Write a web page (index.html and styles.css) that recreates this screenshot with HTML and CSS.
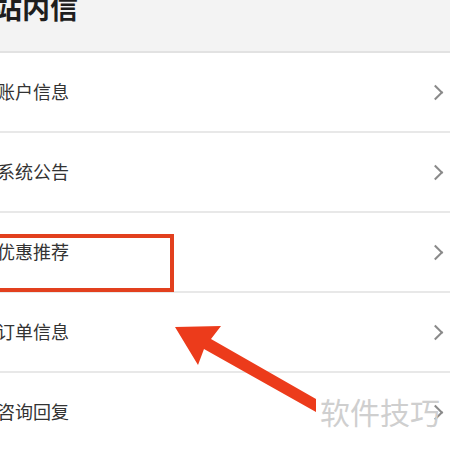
FILE: index.html
```html
<!DOCTYPE html>
<html lang="zh-CN">
<head>
  <meta charset="UTF-8" />
  <meta name="viewport" content="width=device-width, initial-scale=1.0" />
  <title>站内信</title>
  <link rel="stylesheet" href="styles.css">
</head>
<body>
  <div class="page">
    <header class="topbar">
      <h1>站内信</h1>
    </header>

    <!-- message categories -->
    <ul class="menu">
      <li class="menu-item"><span>账户信息</span><i class="chev"></i></li>
      <li class="menu-item"><span>系统公告</span><i class="chev"></i></li>
      <li class="menu-item"><span>优惠推荐</span><i class="chev"></i></li>
      <li class="menu-item"><span>订单信息</span><i class="chev"></i></li>
      <li class="menu-item"><span>咨询回复</span><i class="chev"></i></li>
    </ul>

    <!-- annotation layer -->
    <div class="mark-box"></div>
    <svg class="mark-arrow" width="450" height="450" viewBox="0 0 450 450">
      <polygon points="175,327 221,326 211,339 316,399 316,412 204,349 198,365" fill="#ec3b1b" />
    </svg>
    <div class="watermark">软件技巧</div>
  </div>
</body>
</html>
```

FILE: styles.css
```css
/* RESET & BASE */
* {
  margin: 0;
  padding: 0;
  box-sizing: border-box;
}
body {
  font-family: "Noto Sans CJK SC", "Noto Sans", sans-serif;
  background: #fff;
  color: #333;
  overflow: hidden;
}
.page {
  position: relative;
  width: 450px;
  height: 450px;
  overflow: hidden;
}
/* HEADER */
.topbar {
  height: 53px;
  background: #f3f3f3;
  border-bottom: 2px solid #e2e2e2;
  overflow: hidden;
}
.topbar h1 {
  margin-left: -6px;
  margin-top: -15px;
  font-size: 28px;
  line-height: 44px;
  font-weight: 700;
  color: #1e1e1e;
}
/* MENU */
.menu {
  list-style: none;
}
.menu-item {
  height: 80px;
  display: flex;
  align-items: center;
  justify-content: space-between;
  border-bottom: 2px solid #e8e8e8;
  padding: 0 9px 0 0;
}
.menu-item span {
  margin-left: -3px;
  font-size: 18px;
  color: #333;
  margin-top: -2px;
}
.chev {
  width: 11px;
  height: 11px;
  border-top: 2px solid #8a8a8a;
  border-right: 2px solid #8a8a8a;
  transform: rotate(45deg);
}
/* ANNOTATIONS */
.mark-box {
  position: absolute;
  left: -10px;
  top: 234px;
  width: 184px;
  height: 58px;
  border: 4px solid #e2401e;
}
.mark-arrow {
  position: absolute;
  left: 0;
  top: 0;
}
.watermark {
  position: absolute;
  left: 320px;
  top: 390px;
  font-size: 30px;
  line-height: 42px;
  color: #cfcfcf;
}
```
